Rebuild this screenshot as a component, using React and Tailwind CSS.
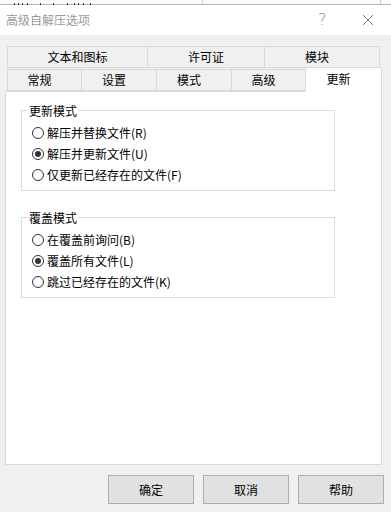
import React from 'react';

const font = { fontFamily: '"Noto Sans CJK SC", "Noto Sans", sans-serif' };

const Radio = ({ checked, label, hot }) => (
  <div className="h-[21px] flex items-center">
    <span className="w-[12px] h-[12px] rounded-full border border-[#333] bg-white flex items-center justify-center">
      {checked && <span className="w-[6px] h-[6px] rounded-full bg-[#333]" />}
    </span>
    <span className="ml-[3px] text-[12px] leading-[16px] text-black">
      {label}({hot})
    </span>
  </div>
);

const Group = ({ title, items, className = '' }) => (
  <div className={`relative w-[314px] border border-[#dcdcdc] pt-[11px] pb-[5px] pl-[10px] ${className}`}>
    <span className="absolute left-[6px] top-[-8px] px-[1px] bg-white text-[12px] leading-[16px] text-black">
      {title}
    </span>
    {items.map((it) => (
      <Radio key={it.label} {...it} />
    ))}
  </div>
);

const Tab = ({ label, w, shift }) => (
  <div
    className={`h-[22px] border border-[#d9d9d9] -ml-px first:ml-0 flex items-center justify-center text-[12px] text-black ${shift ? 'pr-[10px]' : ''}`}
    style={{ width: w }}
  >
    {label}
  </div>
);

export default function App() {
  return (
    <div className="w-[391px] h-[512px] overflow-hidden bg-[#f0f0f0] flex flex-col" style={font}>
      {/* window behind */}
      <svg width="391" height="5" className="block shrink-0">
        <rect x="0" y="0" width="391" height="4" fill="#fafafa" />
        <rect x="0" y="4" width="391" height="1" fill="#b9b9b9" />
        <rect x="202" y="0" width="1" height="4" fill="#cfcfcf" />
        <rect x="380" y="0" width="1" height="4" fill="#cfcfcf" />
        {[14, 18, 22, 27, 40, 53, 67, 74, 78, 83, 90].map((x) => (
          <rect key={x} x={x} y="3" width="1" height="2" fill="#333" />
        ))}
      </svg>

      {/* title bar */}
      <div className="h-[30px] bg-white flex items-center shrink-0 relative">
        <span className="ml-[6px] text-[12px] text-[#9a9a9a]">高级自解压选项</span>
        <span
          className="absolute left-[318px] top-[5px] text-[16px] leading-[20px] text-[#8a8a8a]"
          style={{ fontFamily: '"DejaVu Sans", sans-serif', fontWeight: 300 }}
        >
          ?
        </span>
        <svg className="absolute left-[362px] top-[9px]" width="12" height="12" viewBox="0 0 12 12">
          <path d="M1 1 L11 11 M11 1 L1 11" stroke="#7a7a7a" strokeWidth="1" fill="none" />
        </svg>
      </div>

      {/* tabs */}
      <div className="pt-[11px]">
        <div className="flex ml-[7px]">
          <Tab label="文本和图标" w={141} />
          <Tab label="许可证" w={118} />
          <Tab label="模块" w={116} shift />
        </div>
        <div className="flex ml-[7px] -mt-px items-end">
          <Tab label="常规" w={75} shift />
          <Tab label="设置" w={76} shift />
          <Tab label="模式" w={76} shift />
          <Tab label="高级" w={75} shift />
          <div className="relative z-10 w-[77px] h-[25px] -ml-px -mb-px bg-white border border-b-0 border-[#d9d9d9] flex items-center justify-center pr-[10px] pb-[2px] text-[12px] text-black">
            更新
          </div>
        </div>
      </div>

      {/* panel */}
      <div className="ml-[5px] w-[377px] h-[374px] bg-white border border-[#d9d9d9] pt-[18px] pl-[15px]">
        <Group
          title="更新模式"
          items={[
            { label: '解压并替换文件', hot: 'R' },
            { label: '解压并更新文件', hot: 'U', checked: true },
            { label: '仅更新已经存在的文件', hot: 'F' },
          ]}
        />
        <Group
          className="mt-[26px]"
          title="覆盖模式"
          items={[
            { label: '在覆盖前询问', hot: 'B' },
            { label: '覆盖所有文件', hot: 'L', checked: true },
            { label: '跳过已经存在的文件', hot: 'K' },
          ]}
        />
      </div>

      {/* buttons */}
      <div className="flex gap-[9px] ml-[108px] mt-[10px]">
        {['确定', '取消', '帮助'].map((b) => (
          <button
            key={b}
            className="w-[86px] h-[29px] bg-[#e1e1e1] border border-[#adadad] text-[12px] text-black flex items-center justify-center"
          >
            {b}
          </button>
        ))}
      </div>
    </div>
  );
}
